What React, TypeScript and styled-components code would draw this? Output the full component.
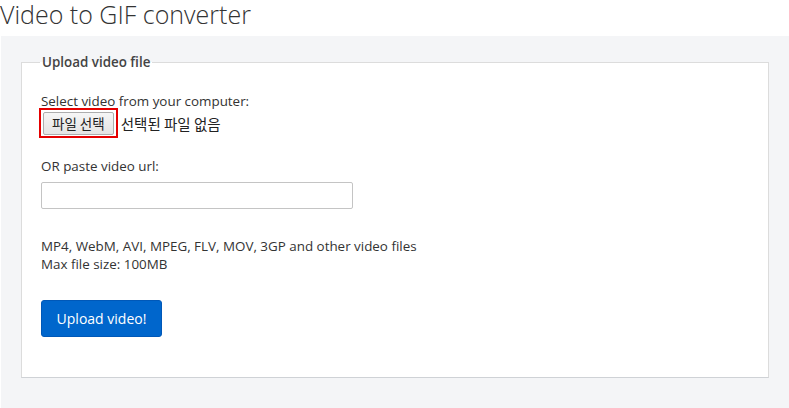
import styled, { createGlobalStyle } from 'styled-components';

const GlobalStyle = createGlobalStyle`
  body {
    margin: 0;
    background: #ffffff;
    font-family: 'Open Sans', 'Noto Sans', 'Noto Sans CJK KR', sans-serif;
    color: #333333;
  }
`;

const Title = styled.h1`
  margin: 0;
  height: 36px;
  font-size: 25px;
  font-weight: 300;
  line-height: 28px;
  color: #333333;
`;

const Panel = styled.div`
  margin-left: 1px;
  background: #f4f5f7;
  padding: 17px 20px 30px 20px;
`;

const Box = styled.fieldset`
  margin: 0;
  background: #ffffff;
  border: 1px solid #dcdcdc;
  border-bottom-color: #cfd2d6;
  padding: 21px 19px 40px 19px;
`;

const Legend = styled.legend`
  margin-left: -1px;
  padding: 0 2px;
  font-size: 13.4px;
  font-weight: 600;
  color: #444444;
`;

const Label = styled.div`
  font-size: 13.4px;
  line-height: 18px;
  color: #333333;
`;

const FileRow = styled.div`
  display: flex;
  align-items: center;
  gap: 3px;
  margin-top: -2px;
  margin-bottom: 19px;
`;

const FileButton = styled.button`
  height: 30px;
  padding: 0 2px;
  border: 2px solid #e50000;
  background: transparent;
  display: flex;
  align-items: center;
  margin-left: -2px;

  span {
    display: block;
    height: 23px;
    line-height: 21px;
    padding: 0 8px;
    box-sizing: border-box;
    border: 1px solid #adadad;
    border-radius: 2px;
    background: linear-gradient(#f6f6f6, #e4e4e4);
    font-family: 'Noto Sans CJK KR', sans-serif;
    font-size: 13.5px;
    color: #222222;
  }
`;

const NoFile = styled.span`
  font-family: 'Noto Sans CJK KR', sans-serif;
  font-size: 14.5px;
  color: #222222;
`;

const UrlInput = styled.input`
  display: block;
  margin-top: 7px;
  width: 312px;
  height: 27px;
  box-sizing: border-box;
  border: 1px solid #c4c4c4;
  border-radius: 2px;
  margin-bottom: 28px;
`;

const Info = styled.div`
  font-size: 13.4px;
  line-height: 18px;
  color: #333333;
  margin-bottom: 27px;
`;

const UploadButton = styled.button`
  display: block;
  width: 121px;
  height: 37px;
  border: 1px solid #0058b8;
  border-radius: 3px;
  background: #0066cc;
  color: #ffffff;
  font-family: 'Open Sans', sans-serif;
  font-size: 14px;
`;

export default function App() {
  return (
    <>
      <GlobalStyle />
      <Title>Video to GIF converter</Title>
      <Panel>
        <Box>
          <Legend>Upload video file</Legend>
          <Label>Select video from your computer:</Label>
          <FileRow>
            <FileButton>
              <span>파일 선택</span>
            </FileButton>
            <NoFile>선택된 파일 없음</NoFile>
          </FileRow>
          <Label>OR paste video url:</Label>
          <UrlInput type="text" />
          <Info>
            MP4, WebM, AVI, MPEG, FLV, MOV, 3GP and other video files
            <br />
            Max file size: 100MB
          </Info>
          <UploadButton>Upload video!</UploadButton>
        </Box>
      </Panel>
    </>
  );
}
